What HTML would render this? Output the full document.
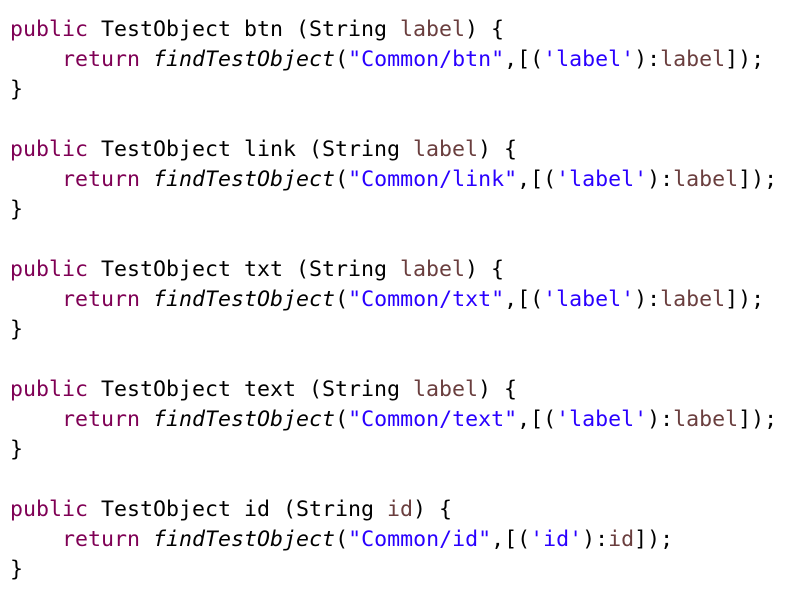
<!DOCTYPE html>
<html><head><meta charset="utf-8"><style>
html,body{margin:0;padding:0;background:#fff;width:808px;height:602px;overflow:hidden}
pre{margin:0;padding:15px 0 0 10px;font-family:"DejaVu Sans Mono","Liberation Mono",monospace;font-size:21.6px;line-height:30px;color:#000}
.k{color:#7f0055}.s{color:#2a00ff}.v{color:#6a3e3e}i{font-style:italic}
</style></head><body><pre><span class="k">public</span> TestObject btn (String <span class="v">label</span>) {
    <span class="k">return</span> <i>findTestObject</i>(<span class="s">"Common/btn"</span>,[(<span class="s">'label'</span>):<span class="v">label</span>]);
}

<span class="k">public</span> TestObject link (String <span class="v">label</span>) {
    <span class="k">return</span> <i>findTestObject</i>(<span class="s">"Common/link"</span>,[(<span class="s">'label'</span>):<span class="v">label</span>]);
}

<span class="k">public</span> TestObject txt (String <span class="v">label</span>) {
    <span class="k">return</span> <i>findTestObject</i>(<span class="s">"Common/txt"</span>,[(<span class="s">'label'</span>):<span class="v">label</span>]);
}

<span class="k">public</span> TestObject text (String <span class="v">label</span>) {
    <span class="k">return</span> <i>findTestObject</i>(<span class="s">"Common/text"</span>,[(<span class="s">'label'</span>):<span class="v">label</span>]);
}

<span class="k">public</span> TestObject id (String <span class="v">id</span>) {
    <span class="k">return</span> <i>findTestObject</i>(<span class="s">"Common/id"</span>,[(<span class="s">'id'</span>):<span class="v">id</span>]);
}</pre></body></html>
